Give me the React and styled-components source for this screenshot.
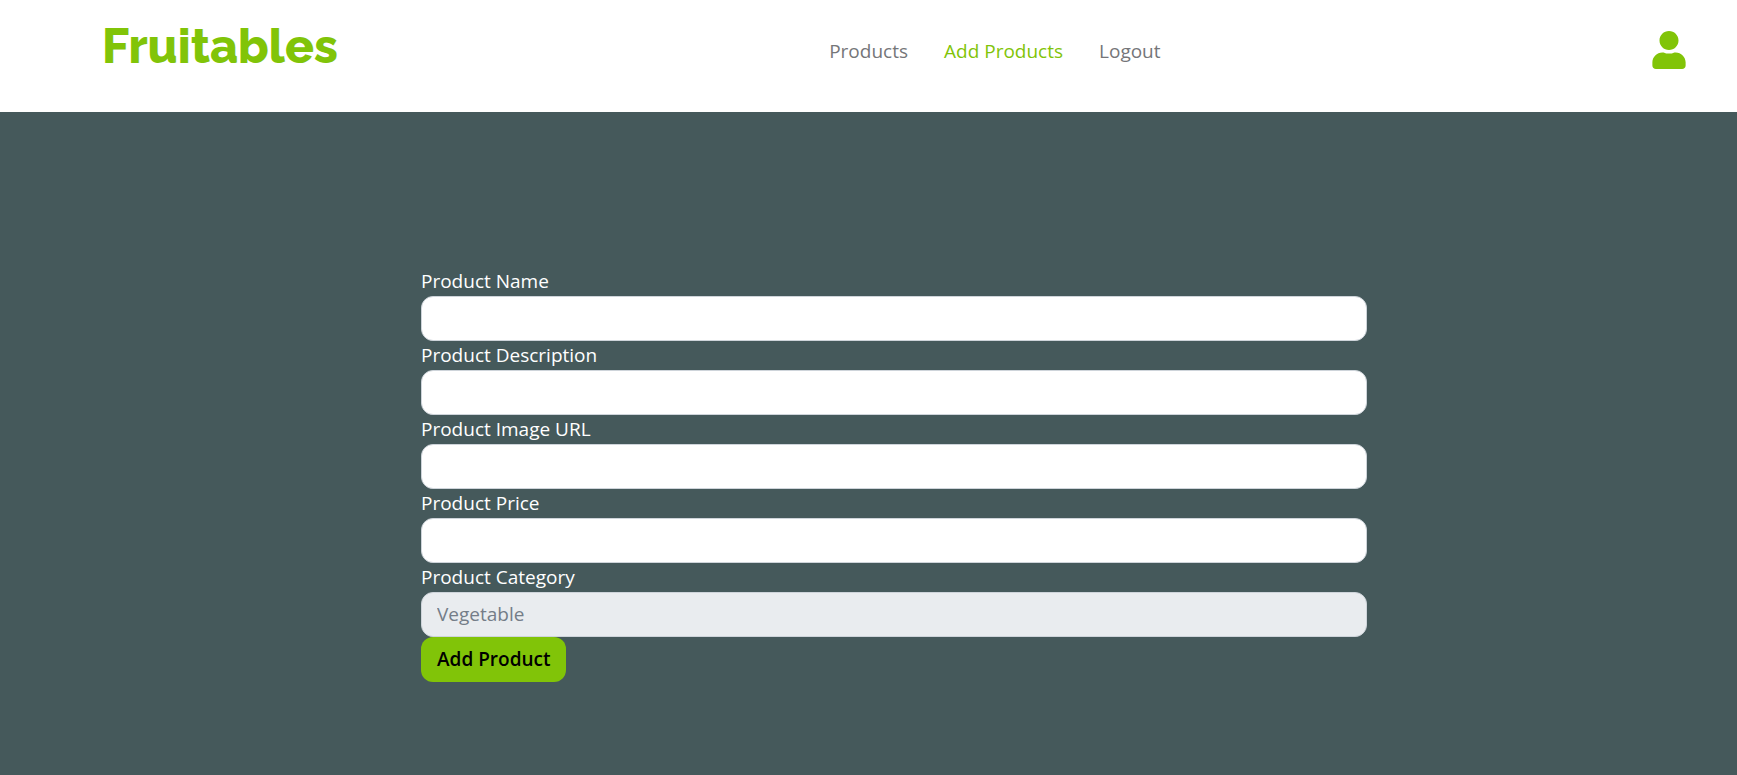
import React from "react";
import styled, { createGlobalStyle } from "styled-components";
import { FaUser } from "react-icons/fa";

const GlobalStyle = createGlobalStyle`
  *, *::before, *::after { box-sizing: border-box; }
  body {
    margin: 0;
    background: #45595b;
    font-family: "Open Sans", sans-serif;
    font-size: 19px;
    line-height: 29px;
  }
`;

const Header = styled.header`
  display: flex;
  align-items: flex-start;
  min-height: 112px;
  padding: 16px 51px 16px 102px;
  background: #fff;
`;

const Brand = styled.a`
  color: #81c408;
  font-family: Raleway, Lato, sans-serif;
  font-size: 48px;
  font-weight: 800;
  line-height: 60px;
  text-decoration: none;
`;

const Nav = styled.nav`
  display: flex;
  flex: 1;
  justify-content: center;
  padding-top: 21px;
`;

const NavLink = styled.a`
  padding: 0 18px;
  color: ${({ $active }) => ($active ? "#81c408" : "#757679")};
  text-decoration: none;
`;

const Account = styled.a`
  display: flex;
  padding-top: 15px;
  color: #81c408;
`;

const UserIcon = styled(FaUser)`
  display: block;
  width: 34px;
  height: 38px;
`;

const Main = styled.main`
  display: grid;
  grid-template-columns: 421fr 946fr 370fr;
  padding: 155px 0 93px;
`;

const Form = styled.form`
  display: flex;
  flex-direction: column;
  align-items: flex-start;
  grid-column: 2;
`;

const Field = styled.div`
  width: 100%;
`;

const Label = styled.label`
  display: block;
  color: #fff;
`;

const Input = styled.input`
  display: block;
  width: 100%;
  height: 45px;
  padding: 6px 15px 8px;
  border: 1px solid #ced4da;
  border-radius: 12px;
  background: #fff;
  color: #747d88;
  font: inherit;

  &::placeholder {
    color: #747d88;
    opacity: 1;
  }

  &:disabled {
    background: #e9ecef;
  }
`;

const SubmitButton = styled.button`
  height: 45px;
  padding: 0 16px;
  border: 0;
  border-radius: 12px;
  background: #81c408;
  color: #000;
  font: inherit;
  font-weight: 600;
  cursor: pointer;
`;

const links = [
  { label: "Products" },
  { label: "Add Products", active: true },
  { label: "Logout" },
];

const fields = [
  { id: "name", label: "Product Name" },
  { id: "description", label: "Product Description" },
  { id: "image", label: "Product Image URL" },
  { id: "price", label: "Product Price" },
  { id: "category", label: "Product Category", placeholder: "Vegetable", disabled: true },
];

export default function App() {
  return (
    <>
      <GlobalStyle />
      <Header>
        <Brand href="#">Fruitables</Brand>
        <Nav>
          {links.map(({ label, active }) => (
            <NavLink key={label} href="#" $active={active} aria-current={active ? "page" : undefined}>
              {label}
            </NavLink>
          ))}
        </Nav>
        <Account href="#" aria-label="Account">
          <UserIcon />
        </Account>
      </Header>
      <Main>
        <Form onSubmit={(e) => e.preventDefault()}>
          {fields.map(({ id, label, placeholder, disabled }) => (
            <Field key={id}>
              <Label htmlFor={id}>{label}</Label>
              <Input id={id} type="text" placeholder={placeholder} disabled={disabled} />
            </Field>
          ))}
          <SubmitButton type="submit">Add Product</SubmitButton>
        </Form>
      </Main>
    </>
  );
}
